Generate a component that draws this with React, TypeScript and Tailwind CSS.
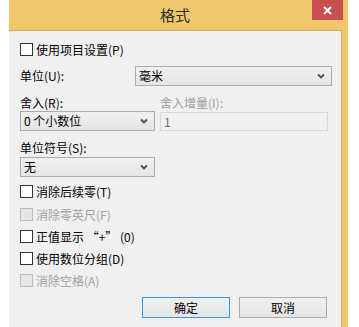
import React from "react";

const font = { fontFamily: '"Noto Sans CJK SC", "Noto Sans", sans-serif' };

function Chevron() {
  return (
    <svg width="8" height="6" viewBox="0 0 8 6" className="shrink-0">
      <path d="M1 1.5 L4 4.5 L7 1.5" fill="none" stroke="#4d4d4d" strokeWidth="1.8" />
    </svg>
  );
}

function Checkbox({ label, disabled = false, mt }: { label: string; disabled?: boolean; mt: string }) {
  return (
    <div className={`flex items-center h-[13px] ${mt}`}>
      <div
        className={`w-[13px] h-[13px] border ${
          disabled ? "border-[#bcbcbc] bg-[#e6e6e6]" : "border-[#333333] bg-white"
        }`}
      />
      <span className={`ml-[3px] text-[12px] leading-[14px] ${disabled ? "text-[#a0a0a0]" : "text-black"}`}>
        {label}
      </span>
    </div>
  );
}

function Select({ value, w }: { value: string; w: string }) {
  return (
    <div
      className={`${w} h-[20px] flex items-center justify-between border border-[#acacac] bg-gradient-to-b from-[#f0f0f0] to-[#e5e5e5] pl-[3px] pr-[6px]`}
    >
      <span className="text-[12px] leading-[14px] text-black">{value}</span>
      <Chevron />
    </div>
  );
}

export default function App() {
  return (
    <div className="w-[359px] h-[327px] bg-white pl-[9px] overflow-hidden" style={font}>
      <div className="w-[339px] h-full flex flex-col bg-[#f0c86b]">
        <div className="relative h-[30px] shrink-0 flex items-center justify-center pr-[7px]">
          <span className="text-[15px] leading-[18px] text-[#2b2b2b]">格式</span>
          <div className="absolute right-[5px] top-0 w-[31px] h-[20px] bg-[#c75050] flex items-center justify-center">
            <svg width="9" height="9" viewBox="0 0 9 9">
              <path d="M1 1 L8 8 M8 1 L1 8" stroke="white" strokeWidth="2" />
            </svg>
          </div>
        </div>
        <div className="flex-1 mr-[6px] bg-[#f0f0f0] border-t border-r border-[#cfae62] pl-[11px] flex flex-col">
          <Checkbox label="使用项目设置(P)" mt="mt-[12px]" />
          <div className="flex items-center mt-[10px] h-[20px]">
            <span className="w-[115px] text-[12px] leading-[14px] text-black">单位(U):</span>
            <Select value="毫米" w="w-[197px]" />
          </div>
          <div className="flex mt-[10px] h-[14px]">
            <span className="w-[140px] text-[12px] leading-[14px] text-black">舍入(R):</span>
            <span className="text-[12px] leading-[14px] text-[#a0a0a0]">舍入增量(I):</span>
          </div>
          <div className="flex mt-[1px] h-[20px]">
            <Select value="0 个小数位" w="w-[135px]" />
            <div className="ml-[5px] mt-[1px] w-[168px] h-[19px] border border-[#d9d9d9] bg-[#f0f0f0] pl-[3px] flex items-center">
              <span className="text-[12px] leading-[14px] text-[#6d6d6d]">1</span>
            </div>
          </div>
          <div className="mt-[10px] h-[14px] text-[12px] leading-[14px] text-black">单位符号(S):</div>
          <div className="mt-[2px]">
            <Select value="无" w="w-[135px]" />
          </div>
          <Checkbox label="消除后续零(T)" mt="mt-[8px]" />
          <Checkbox label="消除零英尺(F)" disabled mt="mt-[10px]" />
          <Checkbox label="正值显示 “+” (0)" mt="mt-[9px]" />
          <Checkbox label="使用数位分组(D)" mt="mt-[9px]" />
          <Checkbox label="消除空格(A)" disabled mt="mt-[9px]" />
          <div className="flex mt-[10px] pl-[122px] gap-[9px]">
            <div className="w-[88px] h-[21px] border border-[#3399ff] bg-gradient-to-b from-[#f0f0f0] to-[#e5e5e5] flex items-center justify-center text-[12px] leading-[14px] text-black">
              确定
            </div>
            <div className="w-[88px] h-[21px] border border-[#acacac] bg-gradient-to-b from-[#f0f0f0] to-[#e5e5e5] flex items-center justify-center text-[12px] leading-[14px] text-black">
              取消
            </div>
          </div>
        </div>
      </div>
    </div>
  );
}
